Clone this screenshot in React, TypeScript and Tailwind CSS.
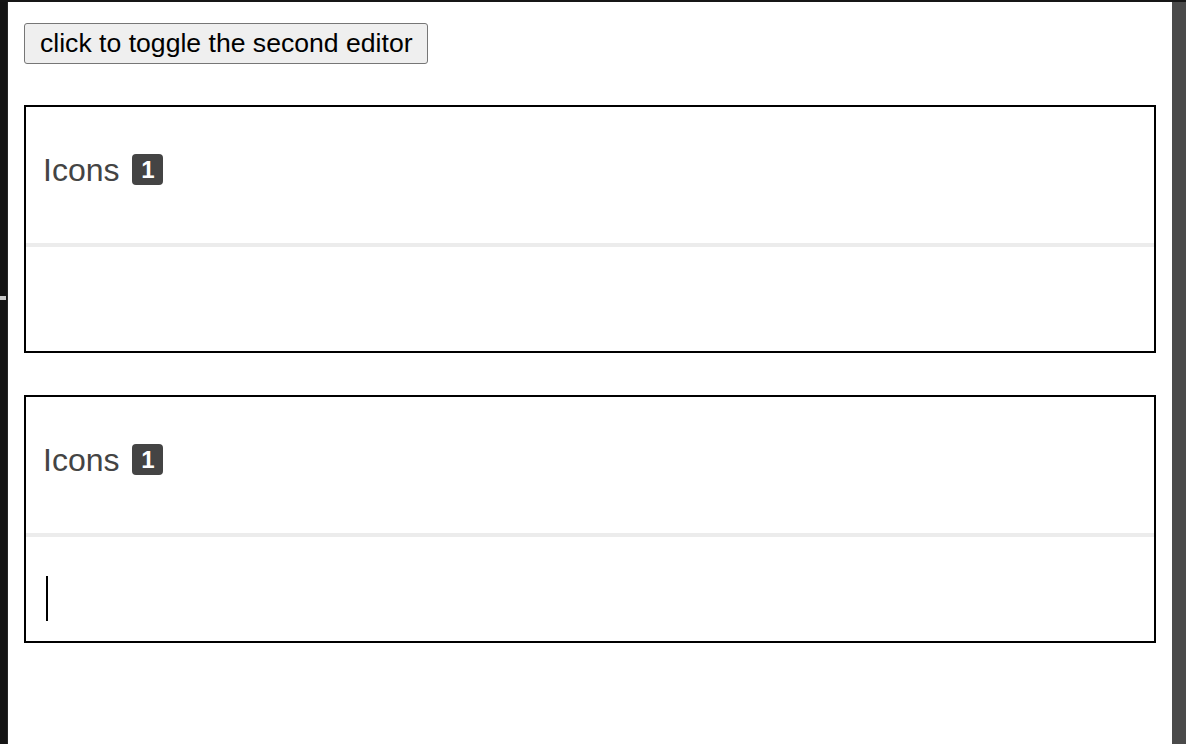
export default function App() {
  const editors = [{ id: 1, focused: false }, { id: 2, focused: true }]

  return (
    <div className="flex h-[744px] w-[1186px] flex-col overflow-hidden bg-[#161616] font-['Liberation_Sans',Arial,sans-serif]">
      {/* top edge */}
      <div className="h-[2px] w-full shrink-0 bg-[#161616]" />
      <div className="flex flex-1">
        {/* left edge */}
        <div className="relative w-[8px] shrink-0 border-r border-[#262626] bg-[#141414]">
          <div className="absolute left-0 top-[294px] h-[4px] w-[6px] bg-[#c8c8c8]" />
        </div>

        {/* page */}
        <div className="flex flex-1 flex-col gap-[42px] bg-white px-4 pt-[21px]">
          <div className="-mb-px">
            <button
              type="button"
              className="rounded-[3px] border border-[#767676] bg-[#efefef] pl-[15px] pr-[14px] py-[4px] text-[26.6px] leading-[31px] text-black"
            >
              click to toggle the second editor
            </button>
          </div>

          {editors.map((editor) => (
            <div key={editor.id} className="flex h-[248px] flex-col border-2 border-black">
              {/* header */}
              <div className="flex h-[136px] items-center pb-[11px] pl-[17px]">
                <span className="text-[32px] leading-none text-[#444]">Icons</span>
                <span className="ml-[13px] flex h-[31px] w-[31px] items-center justify-center rounded-[4px] bg-[#444] text-[24px] font-bold leading-none text-white">
                  1
                </span>
              </div>
              <div className="h-[4px] bg-[#ececec]" />
              {/* body */}
              <div className="flex-1 pl-[20px] pt-[39px]">
                {editor.focused && <div className="h-[45px] w-[2px] bg-black" />}
              </div>
            </div>
          ))}
        </div>

        {/* right edge */}
        <div className="w-[14px] shrink-0 bg-[#4a4a4a]" />
      </div>
    </div>
  )
}
